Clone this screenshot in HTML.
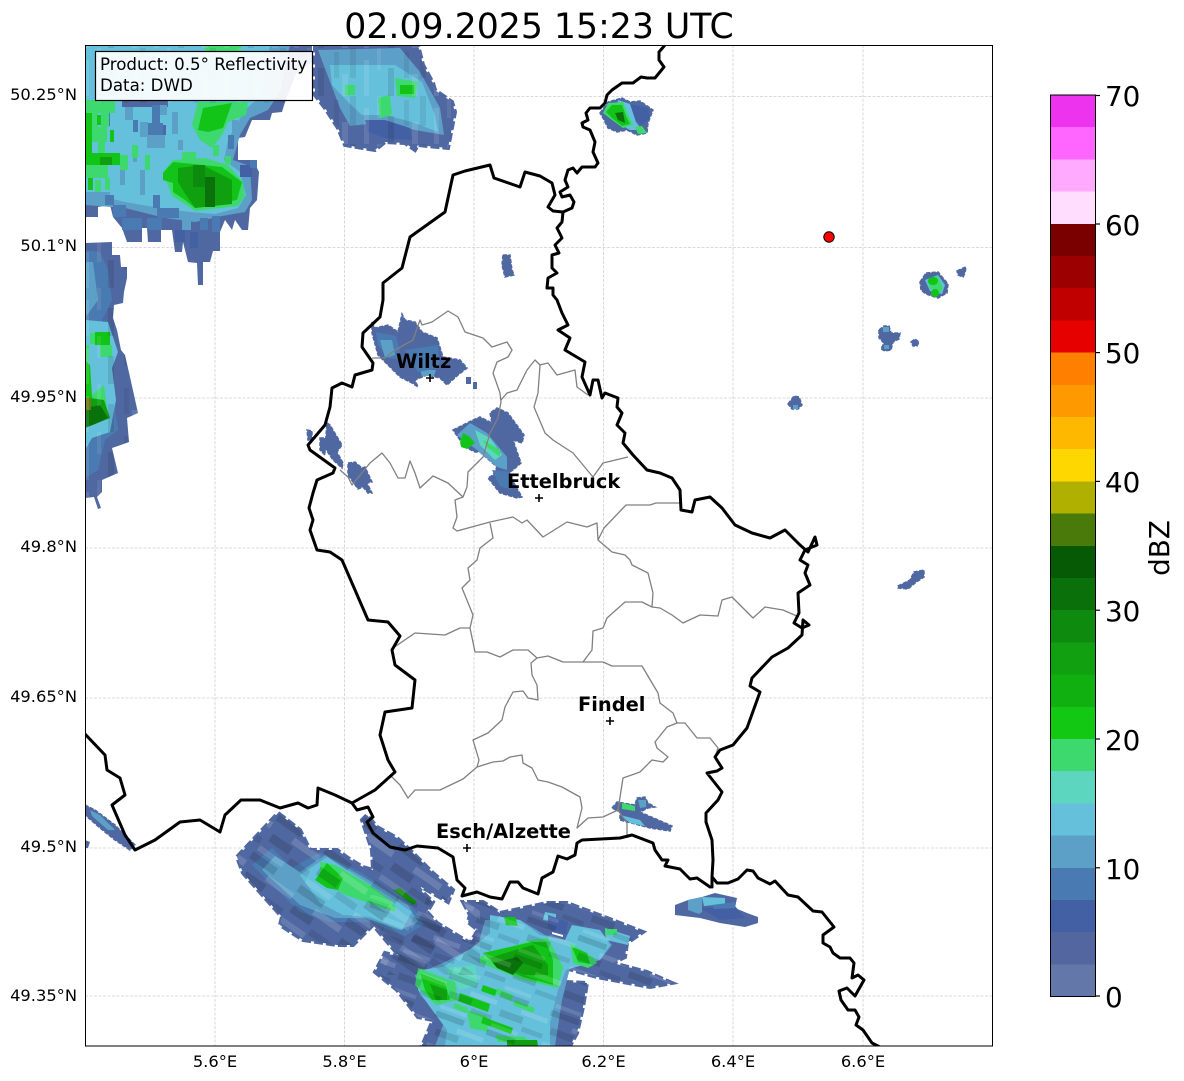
<!DOCTYPE html>
<html><head><meta charset="utf-8"><style>
html,body{margin:0;padding:0;background:#fff}
svg{display:block}
text{font-family:"DejaVu Sans","Liberation Sans",sans-serif;fill:#000}
.a{fill:#5068a2}
.r{stroke:#5068a2;stroke-width:4;stroke-dasharray:9 3}
.s{stroke:#5068a2;stroke-width:1.5;stroke-dasharray:4 1.5}
.n{fill:#4460a5}
.b{fill:#4a7ab2}.c{fill:#5ca0c8}.d{fill:#65c0dc}.e{fill:#5dd6c0}.f{fill:#3ed96e}.g{fill:#12c418}.h{fill:#0f9f0f}.i{fill:#0a720a}
.k{fill:none;stroke:#000;stroke-width:3;stroke-linejoin:round;stroke-linecap:round}
.m{fill:none;stroke:#808080;stroke-width:1.3;stroke-linejoin:round}
.gr{stroke:#cfcfcf;stroke-width:.8;stroke-dasharray:3 1.5}
.y{font-size:16.3px;text-anchor:end}.x{font-size:16.3px;text-anchor:middle}
.l{font-size:19.4px;font-weight:bold}
.cb{font-size:27.8px}
</style></head><body>
<svg width="1184" height="1081" viewBox="0 0 1184 1081" xmlns="http://www.w3.org/2000/svg">
<defs>
<clipPath id="ax"><rect x="85.5" y="45.5" width="907" height="1000.5"/></clipPath>
<clipPath id="cN"><polygon points="315,45 418,45 423,65 433,83 435,90 452,102 455,112 448,148 418,145 415,150 405,143 385,142 375,150 345,145 338,128 325,108 315,95"/></clipPath>
<clipPath id="cS"><polygon points="278,813 300,830 310,850 337,850 348,858 363,867 373,870 372,850 362,820 367,815 377,827 397,838 410,850 433,873 453,890 448,902 427,890 413,883 433,902 427,912 437,923 470,943 478,930 468,922 470,915 463,902 483,902 500,913 547,903 567,903 607,918 643,932 627,943 625,957 613,963 647,972 672,983 650,987 623,982 597,977 565,968 563,982 587,983 583,1007 577,1033 570,1046 422,1046 433,1020 418,1017 397,990 375,972 385,953 400,957 373,925 353,945 337,945 303,940 280,925 282,917 243,873 237,857"/></clipPath>
<clipPath id="cL"><polygon points="85,243 112,242 112,255 120,255 121,267 127,267 127,278 124,292 123,303 114,305 113,318 117,330 121,350 125,355 130,377 138,413 127,418 129,442 118,446 112,448 118,473 102,480 102,492 97,497 85,498"/></clipPath>
<pattern id="sv" width="70" height="48" patternUnits="userSpaceOnUse">
<rect x="0" y="0" width="6" height="30" fill="#000" opacity=".08"/>
<rect x="14" y="12" width="5" height="36" fill="#fff" opacity=".1"/>
<rect x="27" y="0" width="4" height="22" fill="#fff" opacity=".08"/>
<rect x="38" y="20" width="6" height="28" fill="#000" opacity=".1"/>
<rect x="54" y="4" width="5" height="26" fill="#000" opacity=".07"/>
<rect x="62" y="26" width="6" height="22" fill="#fff" opacity=".1"/>
</pattern>
<pattern id="sd" width="58" height="46" patternUnits="userSpaceOnUse" patternTransform="rotate(35)">
<rect x="0" y="0" width="30" height="8" fill="#000" opacity=".14"/>
<rect x="26" y="11" width="32" height="7" fill="#fff" opacity=".14"/>
<rect x="6" y="20" width="24" height="9" fill="#000" opacity=".14"/>
<rect x="34" y="30" width="24" height="7" fill="#000" opacity=".1"/>
<rect x="2" y="37" width="30" height="6" fill="#fff" opacity=".12"/>
</pattern>
<pattern id="se" width="54" height="40" patternUnits="userSpaceOnUse" patternTransform="rotate(20)">
<rect x="0" y="0" width="30" height="6" fill="#000" opacity=".14"/>
<rect x="26" y="10" width="28" height="5" fill="#fff" opacity=".14"/>
<rect x="6" y="17" width="24" height="7" fill="#000" opacity=".12"/>
<rect x="32" y="26" width="22" height="5" fill="#000" opacity=".1"/>
<rect x="2" y="33" width="28" height="4" fill="#fff" opacity=".12"/>
</pattern>
</defs>
<rect width="1184" height="1081" fill="#fff"/>
<text x="539" y="38" font-size="34.7" text-anchor="middle">02.09.2025 15:23 UTC</text>

<g class="gr">
<line x1="215" y1="45" x2="215" y2="1046"/><line x1="344.500" y1="45" x2="344.500" y2="1046"/><line x1="474" y1="45" x2="474" y2="1046"/><line x1="603.500" y1="45" x2="603.500" y2="1046"/><line x1="733" y1="45" x2="733" y2="1046"/><line x1="863" y1="45" x2="863" y2="1046"/>
<line x1="85" y1="96.500" x2="992" y2="96.500"/><line x1="85" y1="247.500" x2="992" y2="247.500"/><line x1="85" y1="398" x2="992" y2="398"/><line x1="85" y1="548" x2="992" y2="548"/><line x1="85" y1="698" x2="992" y2="698"/><line x1="85" y1="848" x2="992" y2="848"/><line x1="85" y1="996" x2="992" y2="996"/>
</g>

<g clip-path="url(#ax)">
<!-- NW complex -->
<polygon class="a" points="85,45 312,45 312,62 296,74 285,102 282,112 272,113 270,120 258,120 252,120 245,137 238,138 238,160 253,160 259,172 257,200 250,208 248,230 242,230 235,220 232,230 225,220 220,232 220,251 213,251 210,262 203,262 203,285 198,285 197,263 188,262 183,242 182,252 175,252 172,230 161,230 161,242 148,242 147,228 142,228 142,242 127,242 122,228 113,217 110,205 98,207 98,217 85,217"/>
<polygon class="c" points="85,45 290,45 280,92 268,110 250,118 240,135 233,160 250,166 252,200 245,212 222,216 195,222 165,218 125,208 85,205"/>
<polygon class="d" points="85,45 270,45 262,95 245,110 236,125 228,140 224,160 240,172 246,195 238,208 215,214 190,212 160,208 125,202 85,192"/>
<!-- blue blocks -->
<rect x="122" y="100" width="46" height="7" class="a"/><rect x="125" y="107" width="8" height="13" class="c"/><rect x="133" y="120" width="5" height="12" class="b"/>
<rect x="140" y="122" width="8" height="15" class="c"/><rect x="148" y="123" width="15" height="12" class="b"/><rect x="152" y="105" width="8" height="18" class="b"/>
<rect x="147" y="135" width="18" height="13" class="c"/><rect x="163" y="125" width="3" height="10" class="a"/><rect x="178" y="140" width="5" height="10" class="c"/>
<rect x="133" y="145" width="4" height="17" class="c"/><rect x="160" y="105" width="7" height="10" class="c"/><rect x="232" y="120" width="6" height="22" class="c"/><rect x="228" y="135" width="6" height="14" class="b"/>
<rect x="85" y="192" width="25" height="13" class="c"/><rect x="105" y="195" width="9" height="10" class="b"/><rect x="113" y="205" width="13" height="12" class="b"/>
<rect x="122" y="218" width="20" height="12" class="b"/><rect x="147" y="218" width="15" height="12" class="b"/><rect x="153" y="195" width="7" height="13" class="b"/>
<rect x="157" y="208" width="22" height="10" class="b"/><rect x="182" y="215" width="9" height="15" class="c"/><rect x="200" y="218" width="8" height="12" class="b"/><rect x="212" y="216" width="8" height="16" class="b"/>
<rect x="175" y="230" width="10" height="12" class="n"/><rect x="190" y="232" width="8" height="16" class="n"/><rect x="240" y="165" width="12" height="12" class="n"/><rect x="250" y="160" width="7" height="8" class="b"/>
<rect x="120" y="160" width="5" height="25" class="c"/><rect x="140" y="170" width="5" height="25" class="c"/><rect x="105" y="108" width="5" height="18" class="b"/><rect x="172" y="112" width="6" height="22" class="c"/>
<rect x="205" y="45" width="36" height="7" class="f"/>
<!-- greens left -->
<rect x="85" y="100" width="30" height="13" class="f"/>
<rect x="92" y="113" width="6" height="14" class="f"/><rect x="101" y="113" width="8" height="14" class="f"/>
<rect x="85" y="113" width="7" height="58" class="g"/><rect x="97" y="115" width="4" height="10" class="g"/><rect x="92" y="127" width="15" height="15" class="f"/>
<rect x="110" y="130" width="4" height="12" class="g"/><rect x="98" y="140" width="7" height="13" class="f"/><rect x="92" y="153" width="28" height="12" class="g"/>
<rect x="100" y="157" width="12" height="8" class="h"/><rect x="120" y="155" width="8" height="15" class="f"/><rect x="85" y="165" width="23" height="13" class="f"/>
<rect x="88" y="178" width="5" height="12" class="g"/><rect x="95" y="180" width="6" height="12" class="f"/><rect x="105" y="178" width="5" height="12" class="f"/>
<rect x="132" y="145" width="6" height="13" class="f"/><rect x="182" y="152" width="14" height="10" class="f"/><rect x="213" y="145" width="6" height="11" class="f"/><rect x="225" y="156" width="6" height="8" class="f"/><rect x="145" y="155" width="5" height="15" class="f"/>
<!-- greens top -->
<polygon class="f" points="192,125 198,102 248,102 246,115 238,118 228,122 222,135 212,148 200,140"/>
<polygon class="g" points="198,130 203,108 232,103 223,128 208,132"/>
<!-- center green -->
<polygon class="f" points="163,172 173,160 205,158 228,165 243,182 245,196 238,206 195,211 185,204 172,196"/>
<polygon class="g" points="163,173 173,162 222,167 242,182 237,200 195,208 185,200 173,192 173,183 163,180"/>
<polygon class="h" points="178,168 202,165 232,180 232,204 195,208 184,192 178,182"/>
<rect x="193" y="165" width="12" height="22" fill="#0c8c0c"/>
<rect x="205" y="177" width="10" height="30" class="i"/>
<rect x="85" y="45" width="227" height="58" fill="url(#sv)"/>

<!-- Left column -->
<polygon class="a" points="85,243 112,242 112,255 120,255 121,267 127,267 127,278 124,292 123,303 114,305 113,318 117,330 121,350 125,355 130,377 138,413 127,418 129,442 118,446 112,448 118,473 102,480 102,492 97,497 101,508 98,509 94,497 85,498"/>
<polygon class="b" points="85,250 100,252 108,270 112,300 102,320 110,345 112,390 118,430 105,440 98,470 85,478"/>
<polygon class="c" points="85,262 93,262 98,300 85,318"/>
<polygon class="d" points="85,320 108,322 118,352 112,368 116,400 110,432 92,438 85,450"/>
<rect x="95" y="332" width="15" height="13" class="g"/><rect x="90" y="333" width="5" height="11" class="f"/><rect x="100" y="345" width="12" height="12" class="f"/>
<rect x="85" y="345" width="4" height="16" class="f"/>
<polygon class="g" points="85,360 90,365 92,395 100,410 85,420"/>
<polygon class="f" points="92,395 104,385 108,415 95,415"/>
<polygon class="h" points="90,398 104,400 110,418 95,424 85,428 85,400"/>
<polygon class="i" points="85,408 100,405 108,418 95,424 85,428"/>
<rect x="85" y="398" width="6" height="12" fill="#6a7a18"/>
<rect x="85" y="240" width="60" height="270" fill="url(#sv)" clip-path="url(#cL)"/>

<!-- N complex -->
<polygon class="a r" points="315,45 418,45 423,65 433,83 435,90 452,102 455,112 448,148 418,145 415,150 405,143 385,142 375,150 345,145 338,128 325,108 315,95"/>
<polygon class="c" points="318,50 400,48 420,72 440,108 444,135 415,130 385,122 350,126 340,108"/>
<polygon class="d" points="330,65 395,65 422,82 435,115 438,132 412,122 385,115 362,115 348,102 332,85"/>
<polygon class="n" points="365,120 385,120 410,128 412,140 385,138 368,132"/>
<rect x="345" y="85" width="10" height="10" class="f"/>
<polygon class="f" points="395,78 418,82 415,98 397,96"/>
<rect x="400" y="85" width="14" height="9" class="g"/>
<polygon class="f" points="378,98 390,95 392,115 380,118"/>
<rect x="315" y="45" width="140" height="108" fill="url(#sv)" clip-path="url(#cN)"/>

<!-- South complex -->
<polygon class="a r" points="278,813 300,830 310,850 337,850 348,858 363,867 373,870 372,850 362,820 367,815 377,827 397,838 410,850 433,873 453,890 448,902 427,890 413,883 433,902 427,912 437,923 470,943 478,930 468,922 470,915 463,902 483,902 500,913 547,903 567,903 607,918 643,932 627,943 625,957 613,963 647,972 672,983 650,987 623,982 597,977 565,968 563,982 587,983 583,1007 577,1033 570,1046 422,1046 433,1020 418,1017 397,990 375,972 385,953 400,957 373,925 353,945 337,945 303,940 280,925 282,917 243,873 237,857"/>
<polygon class="b" points="252,865 272,848 292,868 320,852 360,872 412,906 424,924 405,936 370,922 330,922 300,912 272,885"/>
<polygon class="c" points="262,870 275,856 300,872 325,855 365,878 408,905 418,922 400,930 365,918 335,918 300,905"/>
<polygon class="d" points="300,875 327,857 363,880 390,897 412,912 402,930 370,917 343,915 320,903"/>
<polygon class="c" points="485,920 520,920 545,935 565,940 575,930 600,930 612,945 600,960 570,968 562,1000 555,1046 435,1046 445,1020 420,995 415,975 445,962 478,945"/>
<polygon class="d" points="490,915 520,920 540,935 565,940 572,925 600,930 610,945 600,960 566,970 558,990 550,1023 550,1046 445,1046 447,1030 430,1007 418,990 420,970 443,967 473,947 490,933"/>
<polygon class="d" points="545,912 556,914 556,922 543,920"/><polygon class="d" points="605,928 630,936 628,945 606,940"/>
<polygon class="n" points="548,915 568,922 566,935 548,928"/>
<polygon fill="#fff" points="552,932 563,935 563,937 552,934"/>
<polygon class="e" points="445,968 475,965 478,985 460,990"/>
<polygon class="f" points="320,862 335,865 370,885 395,905 395,912 375,905 345,895 320,880"/>
<polygon class="g" points="315,880 327,863 343,878 338,890 327,888"/>
<polygon points="393,890 400,888 417,902 413,905" fill="#0f8a0a"/>
<polygon class="g" points="504,917 515,917 518,926 506,925"/>
<polygon class="f" points="480,957 532,940 548,938 563,967 558,988 523,980 480,963"/>
<polygon class="g" points="483,953 532,942 546,942 553,960 553,985 523,977 493,963"/>
<polygon class="h" points="490,958 515,950 533,945 548,965 548,975 525,975 495,965"/>
<polygon class="i" points="493,963 517,957 523,963 513,975 497,968"/>
<polygon class="f" points="418,968 455,982 458,1000 436,1005 415,985"/>
<polygon class="g" points="420,973 445,983 450,1000 432,1000 425,990"/>
<polygon class="h" points="430,984 447,990 447,1000 436,1000"/>
<polygon class="g" points="483,985 497,990 495,996 481,991"/>
<polygon class="f" points="497,988 513,995 512,1001 496,994"/>
<polygon class="g" points="460,993 490,1004 488,1012 458,1001"/>
<polygon class="f" points="455,1003 468,1008 466,1013 453,1008"/>
<polygon class="f" points="515,1000 535,1008 533,1013 513,1005"/>
<polygon class="f" points="467,1010 487,1016 488,1032 470,1028"/>
<polygon class="g" points="483,1017 513,1028 511,1034 481,1023"/>
<polygon class="f" points="495,1035 525,1037 530,1043 498,1042"/>
<polygon class="h" points="507,1040 537,1040 538,1046 507,1046"/>
<polygon class="f" points="570,943 593,957 597,963 588,968 573,963"/>
<polygon class="g" points="572,947 587,953 590,964 578,962"/>
<polygon class="f" points="605,929 617,929 617,935 605,935"/>
<rect x="230" y="805" width="250" height="170" fill="url(#sd)" clip-path="url(#cS)"/>
<rect x="370" y="895" width="310" height="151" fill="url(#se)" clip-path="url(#cS)"/>

<!-- Wiltz -->
<polygon class="a s" points="372,322 375,328 388,325 398,332 402,314 405,320 415,322 422,332 437,338 443,357 460,360 467,368 458,375 447,385 440,378 427,375 415,380 418,387 412,383 400,377 388,365 378,355 372,333"/>
<polygon class="b" points="376,332 396,336 402,360 388,358 378,345"/>
<polygon class="c" points="380,340 392,340 395,355 385,358"/>
<polygon class="c" points="420,370 436,370 434,376 422,376"/>
<polygon class="b" points="405,350 438,345 440,368 418,372"/>
<rect x="466" y="377" width="5" height="7" class="a"/><rect x="473" y="382" width="4" height="7" class="a"/>

<!-- Center -->
<polygon class="a s" points="453,430 475,419 480,417 492,423 490,413 497,408 508,413 524,435 522,443 513,440 521,463 513,470 508,473 522,497 517,498 500,493 488,478 493,475 497,467 480,452 475,452 467,448 460,440"/>
<polygon class="c" points="457,435 470,423 487,433 507,457 507,470 497,467 477,450"/>
<polygon class="b" points="492,470 510,472 512,490 500,486"/>
<polygon class="e" points="475,430 490,438 502,455 495,460 480,445"/>
<polygon class="f" points="483,440 500,450 500,457 487,447"/>
<polygon class="g" points="463,433 470,437 475,443 467,449 461,447 460,442"/>

<!-- West small -->
<g class="a s">
<polygon points="307,430 312,431 312,440 308,440"/>
<polygon points="327,423 330,425 342,445 337,452 343,463 342,468 333,460 325,448"/>
<polygon points="320,438 325,438 325,455 320,450"/>
<polygon points="348,463 355,462 362,468 365,467 372,482 367,483 372,493 368,493 363,487 358,489 348,475"/>
</g>
<polygon class="a s" points="503,255 510,255 512,270 514,275 505,277 502,265"/>

<!-- Top storm -->
<polygon class="a s" points="600,113 608,102 622,98 630,102 640,101 653,110 648,123 647,133 637,135 627,130 617,132 608,128 603,118"/>
<polygon class="n" points="630,104 648,108 650,118 642,125 632,118"/>
<polygon class="d" points="618,100 630,104 636,122 642,130 630,130 615,122"/>
<polygon class="f" points="603,113 608,103 623,102 628,115 633,125 623,128 612,120"/>
<polygon class="g" points="606,112 612,105 622,105 626,116 630,124 622,126 612,118"/>
<polygon class="i" points="615,113 623,112 625,123 618,120"/>
<polygon class="f" points="635,127 642,126 647,133 638,134"/>

<!-- East small -->
<polygon class="a s" points="920,282 926,273 938,272 948,284 947,293 938,298 926,294 921,290"/>
<polygon class="d" points="925,280 938,275 945,285 942,294 930,291"/>
<polygon class="f" points="927,280 938,276 943,288 940,294 930,288"/>
<ellipse cx="933" cy="281" rx="5" ry="4" class="g"/><ellipse cx="935" cy="293" rx="4" ry="4" class="g"/>
<polygon class="a s" points="957,271 961,269 966,267 965,273 963,277 958,275"/>
<polygon class="a s" points="879,330 884,326 889,326 891,333 900,333 899,339 893,342 891,350 885,351 881,349 884,343 879,338"/>
<rect x="883" y="327" width="6" height="5" class="c"/><rect x="884" y="345" width="5" height="4" class="c"/>
<polygon class="a s" points="911,342 915,339 919,342 917,346 913,346"/>
<polygon class="a s" points="788,404 794,396 799,397 802,405 798,409 792,409"/>
<rect x="793" y="405" width="5" height="4" class="c"/>
<polygon class="a s" points="898,586 910,580 914,572 924,570 924,577 915,583 908,589 898,588"/>
<!-- E storm -->
<polygon class="a" points="675,905 688,900 702,897 715,893 737,898 735,908 747,913 758,917 758,923 745,927 720,923 700,918 675,915"/>
<polygon class="n" points="700,908 735,906 745,918 720,920"/>
<polygon class="c" points="688,900 702,897 702,912 699,914 688,910"/>
<polygon class="d" points="702,897 725,898 725,904 704,906"/>
<polygon class="b" points="712,905 735,902 735,908 714,909"/>
<polygon class="a s" points="612,808 617,802 635,805 637,798 645,797 648,803 655,807 648,808 640,812 672,826 670,831 650,828 620,820 620,812"/>
<polygon class="d" points="620,815 640,820 645,826 630,823"/>
<polygon class="f" points="622,803 635,806 635,811 622,809"/>
<polygon class="c" points="638,800 646,800 646,807 640,808"/>
<!-- SW small -->
<polygon class="a s" points="85,805 95,810 115,825 135,845 130,850 115,840 100,828 85,815"/>
<polygon class="c" points="90,810 100,815 115,830 108,830 92,816"/>
<polygon class="a" points="85,840 90,842 88,848 85,848"/>

<!-- Gray lines -->
<polyline class="m" points="372,358 385,358 395,350 413,340 420,320 422,325 432,322 448,311 458,317 465,332 483,338 492,347 507,342 512,350 508,357 497,362 493,373 500,393 501,402 498,418 490,433 483,457 468,472 467,487 463,497 455,500 457,517 453,528 457,531 490,522 513,517 522,523 527,520 543,537 567,522 587,527 597,523 598,540 612,552 625,555 630,560 632,565 648,573 653,593 652,607"/>
<polyline class="m" points="501,400 507,393 517,390 527,370 535,360 540,365 548,363 557,375 575,370 577,387 588,395"/>
<polyline class="m" points="540,365 538,393 534,407 545,433 553,440 573,453 593,477 603,463 628,457"/>
<polyline class="m" points="340,470 348,477 352,485 370,463 382,453 390,463 398,478 405,478 410,461 415,473 420,488 433,476 448,483 463,497"/>
<polyline class="m" points="490,523 493,538 480,548 477,560 468,568 470,580 462,588 473,615 470,628 475,652 487,652 500,657 513,650 528,650 537,658 548,656 563,662 583,662 592,650 593,631 603,628 607,618 625,602 642,602 652,607 660,608 672,615 683,623 700,615 718,616 722,600 732,597 753,618 765,607 783,610 799,617"/>
<polyline class="m" points="598,540 604,528 626,505 650,505 656,503 682,503"/>
<polyline class="m" points="393,648 415,633 445,635 460,628 470,628"/>
<polyline class="m" points="537,658 531,663 532,675 537,685 538,700 528,698 523,691 513,692 505,707 502,720 488,733 473,740 479,760 477,767 463,779 440,790 415,790 408,798 400,785 390,775"/>
<polyline class="m" points="583,662 603,662 612,666 642,666 658,693 660,703 673,713 677,723"/>
<polyline class="m" points="477,767 493,762 503,761 510,757 522,755 523,763 532,768 538,780 548,782 562,787 580,797 582,808 577,828 588,818 603,817 618,810 623,778 640,772 652,760 663,762 668,757 657,748 655,742 667,727 677,723 685,723 697,738 710,738 718,748 715,757"/>
<polyline class="m" points="618,810 627,823 627,838"/>

<!-- Black borders -->
<polyline class="k" points="665,45 659,52 659,60 664,67 655,78 647,78 641,77 633,83 622,83 612,90 607,95 605,103 600,108 590,108 586,113 588,120 582,123 583,127 590,130 595,142 593,152 598,163 595,167 582,167 577,173 573,168 568,170 565,180 568,187 560,192 562,197 570,195 574,202 572,208 563,212 553,211 548,207 555,195 552,183 540,176 525,172 520,187 494,178 490,165 465,171 453,175 445,212 410,237 402,268 383,283 383,300 380,317 363,333 362,347 373,363 372,370 355,375 352,387 342,383 332,388 330,407 325,425 308,445 310,450 335,468 333,473 317,480 313,493 309,508 313,520 310,530 317,550 330,552 342,560 355,590 368,620 388,622 400,636 392,650 395,665 415,680 412,708 385,712 380,735 388,760 395,772 375,790 352,803 357,810 368,807 373,817 367,822 373,833 390,847 405,850 417,846 438,848 453,857 457,880 465,888 462,896 477,892 490,897 502,899 510,882 518,882 523,888 538,894 542,878 553,872 558,856 567,859 575,855 577,843 582,840 620,838 632,835 653,843 655,850 662,860 668,860 665,866 680,869 690,879 697,878 710,887"/>
<polyline class="k" points="563,212 562,222 557,228 562,238 555,245 559,253 552,255 552,268 557,273 548,278 547,288 553,288 553,295 557,300 562,313 568,325 558,330 570,338 565,350 585,362 582,377 590,395 593,380 598,380 602,398 605,393 618,398 617,407 622,413 617,425 625,433 623,443 633,455 647,470 660,473 672,478 680,490 681,510 692,512 695,500 710,497 722,508 735,525 752,533 770,538 785,530 800,545 808,552 815,537 817,545 805,550 800,560 808,565 805,573 810,585 798,593 799,613 794,623 802,628 809,625 803,620 802,635 788,648 772,657 752,678 750,686 760,692 747,728 733,745 720,750 715,757 722,768 717,771 707,773 722,792 718,800 706,813 706,822 712,840 713,860 712,877 712,887"/>
<polyline class="k" points="713,878 717,883 728,883 738,879 747,870 753,871 758,878 770,884 775,881 788,895 798,897 813,911 822,912 834,927 823,935 823,943 830,947 833,953 840,958 850,958 854,963 852,978 858,975 864,980 855,996 847,988 839,991 841,1000 848,1010 855,1010 859,1017 856,1025 863,1030 872,1043 880,1047"/>
<polyline class="k" points="85,734 105,755 107,770 120,778 125,795 112,805 125,835 135,850 155,840 180,822 200,820 220,832 225,815 241,800 260,800 280,808 298,803 308,808 317,805 318,788 335,795 352,803"/>

<!-- Red dot -->
<circle cx="829" cy="237" r="5.2" fill="#f00" stroke="#000" stroke-width="1"/>

<!-- City markers -->
<g stroke="#000" stroke-width="1.6">
<path d="M426 378h8M430 374v8"/><path d="M535 498h8M539 494v8"/><path d="M606 721h8M610 717v8"/><path d="M463 848h8M467 844v8"/>
</g>
<text class="l" x="396" y="368">Wiltz</text>
<text class="l" x="507" y="488">Ettelbruck</text>
<text class="l" x="578" y="711">Findel</text>
<text class="l" x="436" y="838">Esch/Alzette</text>

<!-- Legend box -->
<rect x="95.500" y="51.500" width="217" height="49" fill="#fff" fill-opacity=".92" stroke="#000" stroke-width="1.200"/>
<text x="100" y="70" font-size="16.67">Product: 0.5° Reflectivity</text>
<text x="100" y="91" font-size="16.67">Data: DWD</text>
</g>
<rect x="85.500" y="45.500" width="907" height="1000.500" fill="none" stroke="#000" stroke-width="1"/>

<!-- Tick labels -->
<text class="y" x="77" y="100">50.25°N</text>
<text class="y" x="77" y="251">50.1°N</text>
<text class="y" x="77" y="402">49.95°N</text>
<text class="y" x="77" y="552">49.8°N</text>
<text class="y" x="77" y="702">49.65°N</text>
<text class="y" x="77" y="852">49.5°N</text>
<text class="y" x="77" y="1001">49.35°N</text>
<text class="x" x="215" y="1067">5.6°E</text>
<text class="x" x="344.500" y="1067">5.8°E</text>
<text class="x" x="474" y="1067">6°E</text>
<text class="x" x="603.500" y="1067">6.2°E</text>
<text class="x" x="733" y="1067">6.4°E</text>
<text class="x" x="863" y="1067">6.6°E</text>

<!-- Colorbar -->
<g shape-rendering="crispEdges">
<rect x="1051" y="95" width="44" height="32.500" fill="#ee33ee"/>
<rect x="1051" y="127.200" width="44" height="32.500" fill="#ff66ff"/>
<rect x="1051" y="159.400" width="44" height="32.500" fill="#ffaaff"/>
<rect x="1051" y="191.600" width="44" height="32.500" fill="#ffddff"/>
<rect x="1051" y="223.800" width="44" height="32.500" fill="#7a0000"/>
<rect x="1051" y="256" width="44" height="32.500" fill="#9c0000"/>
<rect x="1051" y="288.200" width="44" height="32.500" fill="#c00000"/>
<rect x="1051" y="320.400" width="44" height="32.500" fill="#e60000"/>
<rect x="1051" y="352.600" width="44" height="32.500" fill="#ff7f00"/>
<rect x="1051" y="384.800" width="44" height="32.500" fill="#ff9900"/>
<rect x="1051" y="417" width="44" height="32.500" fill="#ffb800"/>
<rect x="1051" y="449.200" width="44" height="32.500" fill="#ffd700"/>
<rect x="1051" y="481.400" width="44" height="32.500" fill="#b0b000"/>
<rect x="1051" y="513.600" width="44" height="32.500" fill="#4a7a0a"/>
<rect x="1051" y="545.800" width="44" height="32.500" fill="#065a06"/>
<rect x="1051" y="578" width="44" height="32.500" fill="#0a700a"/>
<rect x="1051" y="610.200" width="44" height="32.500" fill="#0e8a0e"/>
<rect x="1051" y="642.400" width="44" height="32.500" fill="#10a010"/>
<rect x="1051" y="674.600" width="44" height="32.500" fill="#10b010"/>
<rect x="1051" y="706.800" width="44" height="32.500" fill="#12c812"/>
<rect x="1051" y="739" width="44" height="32.500" fill="#3ed96e"/>
<rect x="1051" y="771.200" width="44" height="32.500" fill="#5dd6c0"/>
<rect x="1051" y="803.400" width="44" height="32.500" fill="#65c0dc"/>
<rect x="1051" y="835.600" width="44" height="32.500" fill="#5ca0c8"/>
<rect x="1051" y="867.800" width="44" height="32.500" fill="#4a7ab2"/>
<rect x="1051" y="900" width="44" height="32.500" fill="#4460a5"/>
<rect x="1051" y="932.200" width="44" height="32.500" fill="#53669f"/>
<rect x="1051" y="964.400" width="44" height="32.100" fill="#6477a9"/>
</g>
<rect x="1050.500" y="95" width="45" height="901.500" fill="none" stroke="#000" stroke-width="1"/>
<g stroke="#000" stroke-width="1.200">
<line x1="1095" y1="95.500" x2="1100" y2="95.500"/><line x1="1095" y1="224" x2="1100" y2="224"/><line x1="1095" y1="352.600" x2="1100" y2="352.600"/><line x1="1095" y1="481.400" x2="1100" y2="481.400"/><line x1="1095" y1="610.200" x2="1100" y2="610.200"/><line x1="1095" y1="739" x2="1100" y2="739"/><line x1="1095" y1="867.800" x2="1100" y2="867.800"/><line x1="1095" y1="996" x2="1100" y2="996"/>
</g>
<text class="cb" x="1105" y="106">70</text>
<text class="cb" x="1105" y="235">60</text>
<text class="cb" x="1105" y="363">50</text>
<text class="cb" x="1105" y="492">40</text>
<text class="cb" x="1105" y="621">30</text>
<text class="cb" x="1105" y="750">20</text>
<text class="cb" x="1105" y="879">10</text>
<text class="cb" x="1105" y="1007">0</text>
<text class="cb" transform="translate(1169,548) rotate(-90)" text-anchor="middle">dBZ</text>
</svg>
</body></html>
